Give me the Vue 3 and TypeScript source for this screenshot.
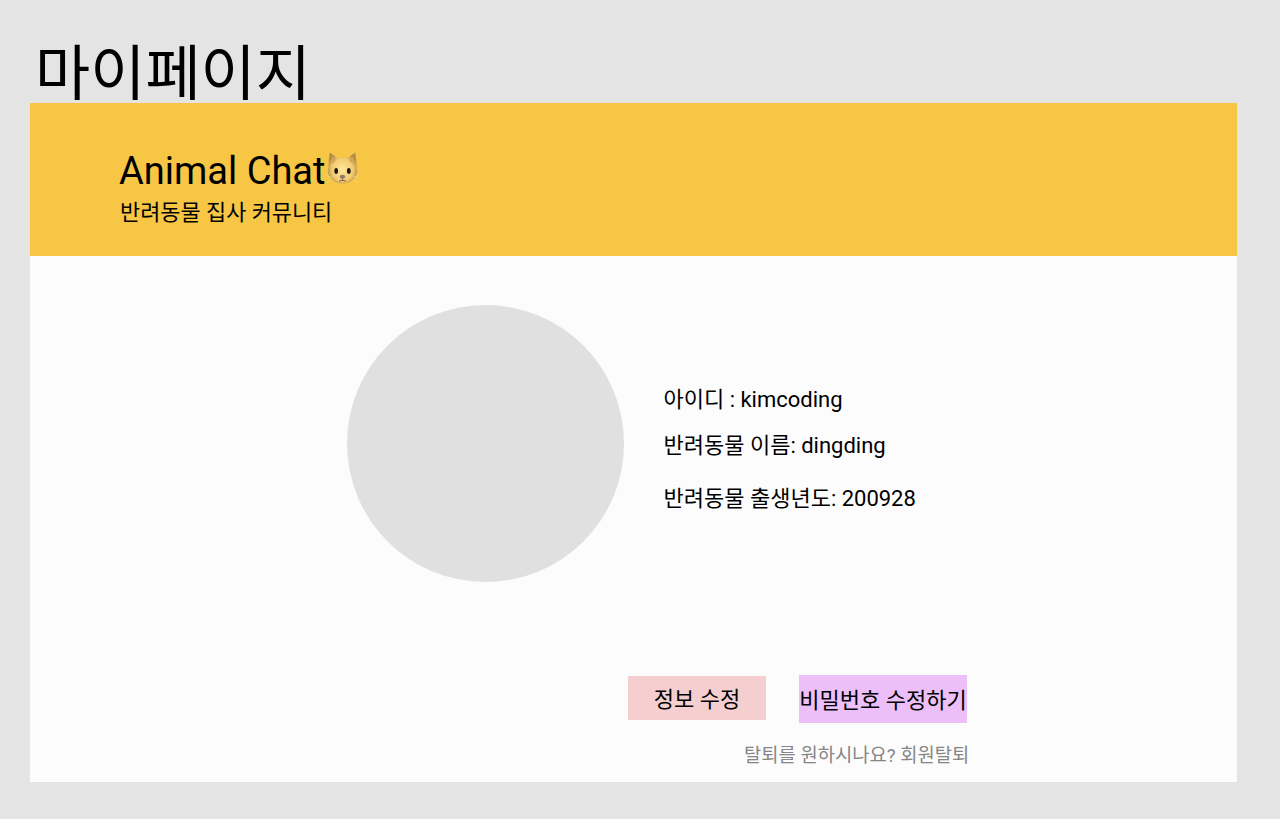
<template>
  <div class="page">
    <h1 class="page-title">마이페이지</h1>
    <div class="card">
      <header class="banner">
        <div class="brand">
          Animal Chat<svg class="cat" viewBox="0 0 36 36" aria-hidden="true">
            <defs>
              <radialGradient id="catFur" cx="50%" cy="55%" r="55%">
                <stop offset="0%" stop-color="#ffe79a" />
                <stop offset="65%" stop-color="#f2cb72" />
                <stop offset="100%" stop-color="#b08a45" />
              </radialGradient>
            </defs>
            <path d="M5 1.500 L13 7.500 Q18 6.500 23 7.500 L31 1.500 Q32.500 11 32.500 17 Q34.500 24 29.500 28.500 Q25 33.500 18 33.500 Q11 33.500 6.500 28.500 Q1.500 24 3.500 17 Q3.500 11 5 1.500 Z" fill="url(#catFur)" />
            <path d="M7 5.500 L11.500 9 L7.500 13.500 Z M29 5.500 L24.500 9 L28.500 13.500 Z" fill="#d6a658" />
            <ellipse cx="11.500" cy="20.500" rx="1.900" ry="3" fill="#20140c" />
            <ellipse cx="24.500" cy="20.500" rx="1.900" ry="3" fill="#20140c" />
            <ellipse cx="18" cy="26.500" rx="2.800" ry="2" fill="#8d7a70" />
            <path d="M18 28.500 V30.500 M14.500 31 Q18 29 21.500 31" stroke="#6b4a30" stroke-width="0.800" fill="none" />
            <path d="M7 27 L0.500 25 M7 30 L1.500 32 M29 27 L35.500 25 M29 30 L34.500 32" stroke="#ecdba8" stroke-width="0.600" />
          </svg>
        </div>
        <div class="tagline">반려동물 집사 커뮤니티</div>
      </header>

      <main class="content">
        <section class="profile">
          <div class="avatar"></div>
          <div class="info">
            <p class="info-id">아이디 : kimcoding</p>
            <p class="info-name">반려동물 이름: dingding</p>
            <p class="info-birth">반려동물 출생년도: 200928</p>
          </div>
        </section>

        <div class="actions">
          <button class="btn btn-edit">정보 수정</button>
          <button class="btn btn-password">비밀번호 수정하기</button>
        </div>
        <div class="leave">탈퇴를 원하시나요? 회원탈퇴</div>
      </main>
    </div>
  </div>
</template>

<script setup lang="ts">
</script>

<style>
html,
body {
  background: #e4e4e4;
}
</style>

<style scoped>
.page {
  height: 819px;
  box-sizing: border-box;
  padding: 37px 43px 0 30px;
  background: #e4e4e4;
  color: #000;
  font-family: Roboto, "Noto Sans CJK KR", sans-serif;
  overflow: hidden;
}

.page-title {
  margin: 0;
  padding-left: 5px;
  height: 66px;
  font-size: 60px;
  line-height: 76px;
  font-weight: 400;
}

.card {
  height: 679px;
  display: flex;
  flex-direction: column;
  background: #fcfcfc;
}

.banner {
  height: 153px;
  box-sizing: border-box;
  padding: 47px 0 0 89px;
  background: #f7c644;
}

.brand {
  display: flex;
  align-items: center;
  height: 42px;
  font-size: 38px;
  line-height: 42px;
}

.cat {
  width: 35px;
  height: 35px;
  margin-top: -6px;
}

.tagline {
  margin-top: 6px;
  padding-left: 1px;
  font-size: 21.900px;
  line-height: 30px;
}

.content {
  flex: 1;
  display: flex;
  flex-direction: column;
}

.profile {
  display: flex;
  align-items: flex-start;
  padding: 49px 0 0 317px;
}

.avatar {
  width: 277px;
  height: 277px;
  flex-shrink: 0;
  border-radius: 50%;
  background: #e0e0e0;
}

.info {
  margin: 80px 0 0 39.500px;
  font-size: 22px;
}

.info p {
  margin: 0;
  line-height: 30px;
}

.info-name {
  padding-top: 16px;
}

.info-birth {
  padding-top: 23px;
}

.actions {
  display: flex;
  align-items: flex-start;
  gap: 33px;
  margin-top: 93px;
  padding-left: 598px;
}

.btn {
  padding: 0 0 3px;
  border: none;
  color: #000;
  font-family: inherit;
  font-size: 22px;
}

.btn-edit {
  width: 138px;
  height: 44px;
  margin-top: 1px;
  background: #f5cfcf;
}

.btn-password {
  width: 168px;
  height: 48px;
  background: #ecbff8;
}

.leave {
  margin-top: 20px;
  padding-left: 714px;
  color: #868686;
  font-size: 18.750px;
  line-height: 26px;
}
</style>
